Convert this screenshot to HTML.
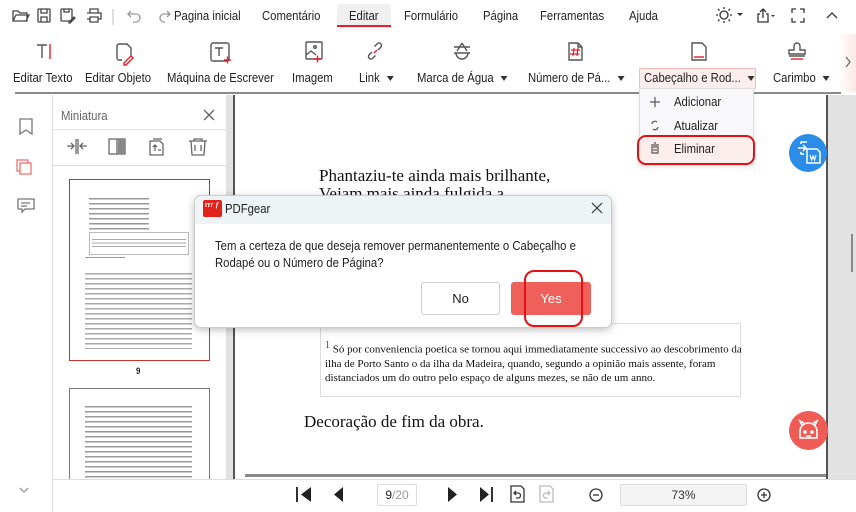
<!DOCTYPE html>
<html><head><meta charset="utf-8"><style>
*{box-sizing:border-box;margin:0;padding:0}
body{width:856px;height:512px;overflow:hidden;background:#fff;font-family:"Liberation Sans",sans-serif;color:#222;position:relative;font-size:13px}
.a{position:absolute}
.t{position:absolute;white-space:nowrap;transform:scaleX(.87);transform-origin:left center}
.menu{font-size:13px;top:8px}
.lbl{font-size:13px;top:70px}
.caret{display:inline-block;width:0;height:0;border-left:4px solid transparent;border-right:4px solid transparent;border-top:5px solid #333;vertical-align:middle;margin-left:8px}
.ser{font-family:"Liberation Serif",serif;color:#111}
.ser.t{transform:none}
svg{position:absolute;overflow:visible}
</style></head><body>
<!-- top menu bar -->
<svg style="left:0;top:0" width="856" height="32" fill="none" stroke="#444" stroke-width="1.3">
<path d="M13 11h5l2 2h7v8H13z M13 21l3-6h13l-3 6"/>
<rect x="38" y="9" width="12" height="13" rx="1"/><path d="M41 9v4h6V9 M41 22v-5h6v5"/>
<rect x="61" y="9" width="11" height="12" rx="1"/><path d="M64 9v3h5V9 M69 22l5-5 1 1-5 5h-1z"/>
<path d="M87 13h14v6h-3 M90 13V9h8v4 M90 17h8v5h-8z M87 19h3"/>
<path d="M113 9v16" stroke="#ccc"/>
<path d="M131 11l-3 3 3 3 M128 14h8a4 4 0 010 8h-3" stroke="#999"/>
<path d="M167 11l3 3-3 3 M170 14h-6a4 4 0 000 8h1" stroke="#999"/>
</svg>
<div class="t menu" style="left:174px">Pagina inicial</div>
<div class="t menu" style="left:262px">Comentário</div>
<div class="a" style="left:337px;top:4px;width:54px;height:24px;background:#f0f0f0;border-radius:4px 4px 0 0"></div>
<div class="a" style="left:337px;top:25px;width:54px;height:2px;background:#e5202a"></div>
<div class="t menu" style="left:349px">Editar</div>
<div class="t menu" style="left:404px">Formulário</div>
<div class="t menu" style="left:483px">Página</div>
<div class="t menu" style="left:540px">Ferramentas</div>
<div class="t menu" style="left:629px">Ajuda</div>
<svg style="left:0;top:0" width="856" height="32" fill="none" stroke="#333" stroke-width="1.3">
<circle cx="724" cy="15" r="4"/><path d="M724 7v2M724 21v2M716 15h2M730 15h2M718 9l1.5 1.5M728.5 19.5l1.5 1.5M718 21l1.5-1.5M728.5 10.5l1.5-1.5"/>
<path d="M737 14l3 3 3-3" fill="#333" stroke="none" transform="translate(0,-1)"/>
<path d="M760 14h-2v8h10v-8h-2 M763 18V9 M760 12l3-3 3 3"/>
<path d="M771 15h4l-2 2z" fill="#333" stroke="none"/>
<path d="M792 13V9h4 M800 9h4v4 M804 18v4h-4 M796 22h-4v-4"/>
<path d="M827 18l5-5 5 5"/>
</svg>
<!-- toolbar -->
<svg style="left:0;top:0" width="856" height="70" fill="none" stroke="#555" stroke-width="1.4">
<path d="M37 45h10 M42 45v13"/><path d="M50 44v15" stroke="#e5202a"/>
<path d="M119 44h8l4 4v8 M119 44a2 2 0 00-2 2v12a2 2 0 002 2h3"/><path d="M124 63l7-7 2 2-7 7h-2z" stroke="#e5202a"/>
<rect x="211" y="43" width="18" height="18" rx="2"/><path d="M215 48h8 M219 48v8"/><path d="M224 60h7 M227.5 56.5v7" stroke="#e5202a"/>
<rect x="306" y="42" width="16" height="17" rx="1"/><path d="M306 55l5-4 5 4"/><circle cx="315" cy="47" r="1.3"/><path d="M314 59h7 M317.5 55.5v7" stroke="#e5202a"/>
<path d="M372 52l-3 3a2.5 2.5 0 003.5 3.5l3-3 M378 50l3-3a2.5 2.5 0 00-3.5-3.5l-3 3"/><path d="M374 53l3-3" stroke="#e5202a"/>
<path d="M454 47h16 M454 53h16 M456 53a6 6 0 0012 0 M462 43l-5 8 M462 43l5 8"/>
<path d="M569 43h9l4 4v13h-13z M578 43v4h4"/><path d="M574 48l-1 8 M578 48l-1 8 M571 50h9 M570 54h9" stroke="#e5202a" stroke-width="1.2"/>
<path d="M692 43h10l4 4v13h-14z"/><path d="M694 57h10" stroke="#e5202a"/>
<path d="M797 43a3 3 0 013 3v4h5v4h-16v-4h5v-4a3 3 0 013-3z M789 56h16"/><path d="M791 59h12" stroke="#e5202a"/>
</svg>
<div class="t lbl" style="left:13px">Editar Texto</div>
<div class="t lbl" style="left:85px">Editar Objeto</div>
<div class="t lbl" style="left:167px">Máquina de Escrever</div>
<div class="t lbl" style="left:292px">Imagem</div>
<div class="t lbl" style="left:359px">Link<span class="caret"></span></div>
<div class="t lbl" style="left:417px">Marca de Água<span class="caret"></span></div>
<div class="t lbl" style="left:528px">Número de Pá...<span class="caret"></span></div>
<div class="a" style="left:639px;top:68px;width:117px;height:21px;background:#fdeeee;border:1px solid #f4b8b8;border-radius:2px"></div>
<div class="t lbl" style="left:644px">Cabeçalho e Rod...<span class="caret"></span></div>
<div class="t lbl" style="left:773px">Carimbo<span class="caret"></span></div>
<div class="a" style="left:838px;top:34px;width:18px;height:58px;background:linear-gradient(90deg,#fff,#fde8e8)"></div>
<svg style="left:0;top:0" width="856" height="90" fill="none" stroke="#666" stroke-width="1.2"><path d="M846 57l4 5-4 5"/></svg>
<div class="a" style="left:15px;top:92px;width:826px;height:2px;background:#8a8a8a"></div>
<!-- left column -->
<div class="a" style="left:52px;top:95px;width:1px;height:417px;background:#ddd"></div>
<svg style="left:0;top:0" width="60" height="512" fill="none" stroke="#777" stroke-width="1.3">
<path d="M20 119h12v15l-6-4-6 4z"/>
<rect x="17" y="160" width="11" height="11" stroke="#f07070"/><rect x="20" y="163" width="11" height="11" stroke="#f07070" fill="#fff"/>
<path d="M18 199h16v10h-9l-3 3v-3h-4z"/><path d="M21 203h9 M21 206h6"/>
<path d="M20 488l4 4 4-4" stroke="#999"/>
</svg>
<!-- thumbnail panel -->
<div class="t" style="left:61px;top:108px;font-size:13px;color:#666">Miniatura</div>
<svg style="left:0;top:0" width="230" height="170" fill="none" stroke="#666" stroke-width="1.3">
<path d="M204 110l10 10 M214 110l-10 10"/>
<path d="M67 146h7 M71 143l3 3-3 3 M87 146h-7 M83 143l-3 3 3 3 M76 139v15 M78 139v15"/>
<path d="M109 139h16v15h-16z M117 139v15" /><rect x="118" y="139" width="7" height="15" fill="#888" stroke="none"/>
<path d="M150 141h10l3 3v11h-13z M153 139h9 M155 151v-6 M153 147l2-2 2 2 M158 150h3"/>
<path d="M189 141h18 M191 141l1 14h12l1-14 M195 145v6 M201 145v6 M194 141v-2h8v2"/>
</svg>
<div class="a" style="left:53px;top:129px;width:173px;height:1px;background:#ddd"></div>
<div class="a" style="left:53px;top:165px;width:173px;height:1px;background:#ddd"></div>
<div class="a" style="left:69px;top:179px;width:141px;height:182px;border:1px solid #c9302c;background:#fff"></div>
<div class="a" style="left:89px;top:196px;width:60px;height:43px;background:repeating-linear-gradient(#fff 0,#fff 2px,#999 2px,#999 3.5px,#fff 3.5px,#fff 5px)"></div>
<div class="a" style="left:89px;top:232px;width:100px;height:23px;border:1px solid #bbb;background:#fff"></div>
<div class="a" style="left:92px;top:238px;width:94px;height:10px;background:repeating-linear-gradient(#fff 0,#fff 1px,#aaa 1px,#aaa 2px,#fff 2px,#fff 3.5px)"></div>
<div class="a" style="left:85px;top:257px;width:40px;height:1px;background:#999"></div>
<div class="a" style="left:85px;top:271px;width:107px;height:78px;background:repeating-linear-gradient(#fff 0,#fff 2px,#aaa 2px,#aaa 3.3px,#fff 3.3px,#fff 5px)"></div>
<div class="t" style="left:136px;top:366px;font-size:9px;font-weight:bold">9</div>
<div class="a" style="left:69px;top:388px;width:141px;height:92px;border:1px solid #777;border-bottom:none;background:#fff"></div>
<div class="a" style="left:85px;top:404px;width:107px;height:76px;background:repeating-linear-gradient(#fff 0,#fff 2px,#999 2px,#999 3.3px,#fff 3.3px,#fff 5px)"></div>
<div class="a" style="left:226px;top:95px;width:7px;height:385px;background:#e2e2e2"></div>
<!-- document -->
<div class="a" style="left:233px;top:95px;width:594px;height:385px;background:#fff;border-left:2px solid #555"></div>
<div class="a" style="left:826px;top:95px;width:30px;height:385px;background:#e2e2e2;border-left:2px solid #555"></div>
<div class="a" style="left:851px;top:234px;width:2px;height:38px;background:#888"></div>
<div class="t ser" style="left:319px;top:166px;font-size:17px">Phantaziu-te ainda mais brilhante,</div>
<div class="t ser" style="left:319px;top:184px;font-size:17px">Vejam mais ainda fulgida a</div>
<div class="a" style="left:320px;top:323px;width:421px;height:74px;border:1px solid #ddd"></div>
<div class="ser a" style="left:325px;top:339px;font-size:11px;line-height:14px;white-space:nowrap"><sup style="color:#33c;font-size:10px">1</sup> Só por conveniencia poetica se tornou aqui immediatamente successivo ao descobrimento da<br>ilha de Porto Santo o da ilha da Madeira, quando, segundo a opinião mais assente, foram<br>distanciados um do outro pelo espaço de alguns mezes, se não de um anno.</div>
<div class="t ser" style="left:304px;top:412px;font-size:17px">Decoração de fim da obra.</div>
<div class="a" style="left:245px;top:474px;width:581px;height:3px;background:#888"></div>
<!-- floating buttons -->
<div class="a" style="left:789px;top:134px;width:38px;height:38px;border-radius:50%;background:#2b8de8"></div>
<svg style="left:789px;top:134px" width="38" height="38" fill="none" stroke="#fff" stroke-width="1.5"><path d="M9 14h8 M14 11l3 3-3 3 M12 10V8h6 M12 18v2h3"/><path d="M18 15h10l3 3v11H18z"/><path d="M21 21l1.5 5 1.5-4 1.5 4 1.5-5" stroke-width="1.2"/></svg>
<div class="a" style="left:789px;top:411px;width:39px;height:39px;border-radius:50%;background:#ef5b55"></div>
<svg style="left:789px;top:411px" width="39" height="39" fill="none" stroke="#fff" stroke-width="1.6"><path d="M11 20a8.5 8 0 0117 0v7H11z M13 14l-2-4 4 2 M26 14l2-4-4 2"/><circle cx="16" cy="21" r="1" fill="#fff"/><circle cx="23" cy="21" r="1" fill="#fff"/><path d="M17 25h5"/></svg>
<!-- dropdown -->
<div class="a" style="left:639px;top:88px;width:115px;height:77px;background:#f8f8fa;border:1px solid #ddd;box-shadow:0 2px 4px rgba(0,0,0,.1)"></div>
<div class="a" style="left:637px;top:135px;width:118px;height:30px;background:#fdeeee;border:2.5px solid #e60f14;border-radius:9px"></div>
<svg style="left:0;top:0" width="700" height="170" fill="none" stroke="#555" stroke-width="1.2">
<path d="M655 97v10 M650 102h10"/>
<path d="M652 124a3 3 0 015-2 M658 127a3 3 0 01-5 2"/>
<path d="M651 145h8 M652 147h6v6h-6z M654 143h2 M654 149v2 M656 149v2"/>
</svg>
<div class="t" style="left:674px;top:94px;font-size:13px">Adicionar</div>
<div class="t" style="left:674px;top:118px;font-size:13px">Atualizar</div>
<div class="t" style="left:674px;top:141px;font-size:13px">Eliminar</div>
<!-- dialog -->
<div class="a" style="left:194px;top:195px;width:418px;height:133px;background:#fff;border:1px solid #ccc;border-radius:7px;box-shadow:0 2px 8px rgba(0,0,0,.25);overflow:hidden">
<div style="height:28px;background:#eef4f6"></div></div>
<div class="a" style="left:203px;top:200px;width:19px;height:17px;background:#e2231a;border-radius:2px"></div>
<div class="a" style="left:205px;top:202px;font-size:7px;color:#fff;font-weight:bold;white-space:nowrap">rrr ƒ</div>
<div class="t" style="left:225px;top:201px;font-size:13px">PDFgear</div>
<svg style="left:0;top:0" width="620" height="230" fill="none" stroke="#333" stroke-width="1.2"><path d="M592 203l10 10 M602 203l-10 10"/></svg>
<div class="t" style="left:215px;top:237px;font-size:13px;line-height:17px">Tem a certeza de que deseja remover permanentemente o Cabeçalho e<br>Rodapé ou o Número de Página?</div>
<div class="a" style="left:421px;top:282px;width:79px;height:33px;border:1px solid #ccc;border-radius:3px;text-align:center;line-height:31px;font-size:13px">No</div>
<div class="a" style="left:511px;top:282px;width:80px;height:33px;background:#f0605a;border-radius:3px;text-align:center;line-height:33px;font-size:13px;color:#fff">Yes</div>
<div class="a" style="left:524px;top:270px;width:59px;height:57px;border:2.5px solid #e60f14;border-radius:10px"></div>
<!-- bottom bar -->
<div class="a" style="left:53px;top:479px;width:803px;height:1px;background:#ddd"></div>
<svg style="left:0;top:0" width="856" height="512" stroke="#333" stroke-width="1.3">
<path d="M297 487v15" stroke-width="2"/><path d="M311 487v15l-10-7.5z" fill="#222" stroke="none"/>
<path d="M343 487v15l-9-7.5z" fill="#222" stroke="none"/>
<path d="M448 487v15l9-7.5z" fill="#222" stroke="none"/>
<path d="M480 487v15l9-7.5z" fill="#222" stroke="none"/><path d="M492 487v15" stroke-width="2"/>
<path d="M511 486h10l3 3v13h-13z" fill="none"/><path d="M516 491l-2 2 2 2 M514 493h4a2 2 0 010 5h-2" fill="none"/>
<path d="M540 486h10l3 3v13h-13z M548 491l2 2-2 2 M550 493h-4a2 2 0 000 5h2" fill="none" stroke="#bbb"/>
<circle cx="596" cy="495" r="6" fill="none"/><path d="M593 495h6"/>
<circle cx="764" cy="495" r="6" fill="none"/><path d="M761 495h6 M764 492v6"/>
</svg>
<div class="a" style="left:377px;top:484px;width:40px;height:22px;border:1px solid #ddd;border-radius:2px;font-size:12px;line-height:20px;text-align:center">9<span style="color:#999">/20</span></div>
<div class="a" style="left:620px;top:484px;width:127px;height:22px;border:1px solid #ddd;background:#f4f4f4;border-radius:2px;font-size:12px;line-height:20px;text-align:center;color:#333">73%</div>
</body></html>
